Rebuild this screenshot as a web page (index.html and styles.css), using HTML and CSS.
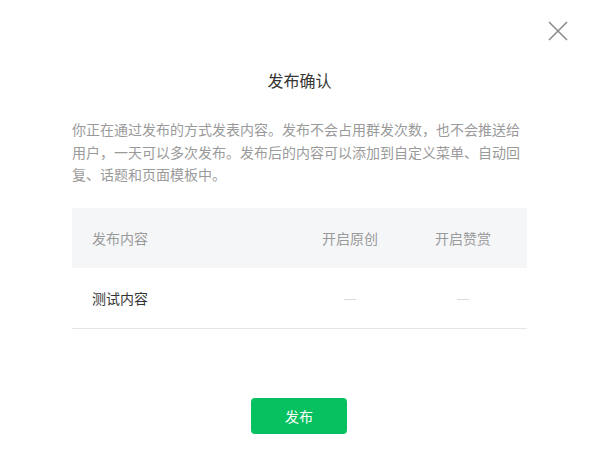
FILE: index.html
```html
<!DOCTYPE html>
<html lang="zh">
<head>
<meta charset="utf-8">
<link rel="stylesheet" href="styles.css">
</head>
<body>
<div class="dialog">
  <button class="close" aria-label="关闭">
    <svg width="20" height="20" viewBox="0 0 20 20"><path d="M1 1L19 19M19 1L1 19" stroke="#8c8c8c" stroke-width="1.6" fill="none"/></svg>
  </button>
  <h1 class="title">发布确认</h1>
  <p class="desc">你正在通过发布的方式发表内容。发布不会占用群发次数，也不会推送给用户，一天可以多次发布。发布后的内容可以添加到自定义菜单、自动回复、话题和页面模板中。</p>
  <div class="table">
    <div class="row head">
      <div class="cell c1">发布内容</div>
      <div class="cell c2"><span class="lbl">开启原创</span></div>
      <div class="cell c3"><span class="lbl">开启赞赏</span></div>
    </div>
    <div class="row body">
      <div class="cell c1">测试内容</div>
      <div class="cell c2"><span class="lbl"><i class="dash"></i></span></div>
      <div class="cell c3"><span class="lbl"><i class="dash"></i></span></div>
    </div>
  </div>
  <div class="footer">
    <button class="btn">发布</button>
  </div>
</div>
</body>
</html>
```
FILE: styles.css
```css
html, body {
  margin: 0;
  padding: 0;
  background: #fff;
}
body {
  font-family: "Noto Sans CJK SC", "Noto Sans", sans-serif;
  font-size: 14px;
  color: #353535;
}
.dialog {
  position: relative;
  width: 596px;
  height: 452px;
  box-sizing: border-box;
  padding: 68px 69px 0 72px;
}
.close {
  position: absolute;
  top: 21px;
  left: 548px;
  width: 20px;
  height: 20px;
  padding: 0;
  border: 0;
  background: none;
  cursor: pointer;
}
.close svg { display: block; }
.title {
  margin: 0;
  font-size: 16px;
  font-weight: normal;
  line-height: 24px;
  text-align: center;
  color: #353535;
}
.desc {
  margin: 26px 0 0;
  font-size: 14px;
  line-height: 22.5px;
  color: #9a9a9a;
  width: 456px;
}
.table {
  margin-top: 22px;
  width: 455px;
}
.row {
  display: flex;
  align-items: center;
  height: 60px;
}
.row.head {
  background: #f5f6f8;
  color: #9a9a9a;
}
.row.body {
  border-bottom: 1px solid #e6e6e6;
  color: #353535;
}
.cell {
  box-sizing: border-box;
  padding: 0 20px;
}
.c1 { width: 230px; }
.c2 { width: 113px; }
.c3 { width: 112px; }
.lbl {
  display: inline-block;
  width: 56px;
  text-align: center;
  white-space: nowrap;
}
.dash {
  display: inline-block;
  width: 12px;
  height: 1px;
  background: #dcdcdc;
  vertical-align: middle;
}
.footer {
  display: flex;
  justify-content: center;
  margin-top: 69px;
}
.btn {
  width: 96px;
  height: 36px;
  border: 0;
  border-radius: 4px;
  background: #07c160;
  color: #fff;
  font-family: "Noto Sans CJK SC", sans-serif;
  font-size: 14px;
  cursor: pointer;
  margin-left: -1px;
}
```
